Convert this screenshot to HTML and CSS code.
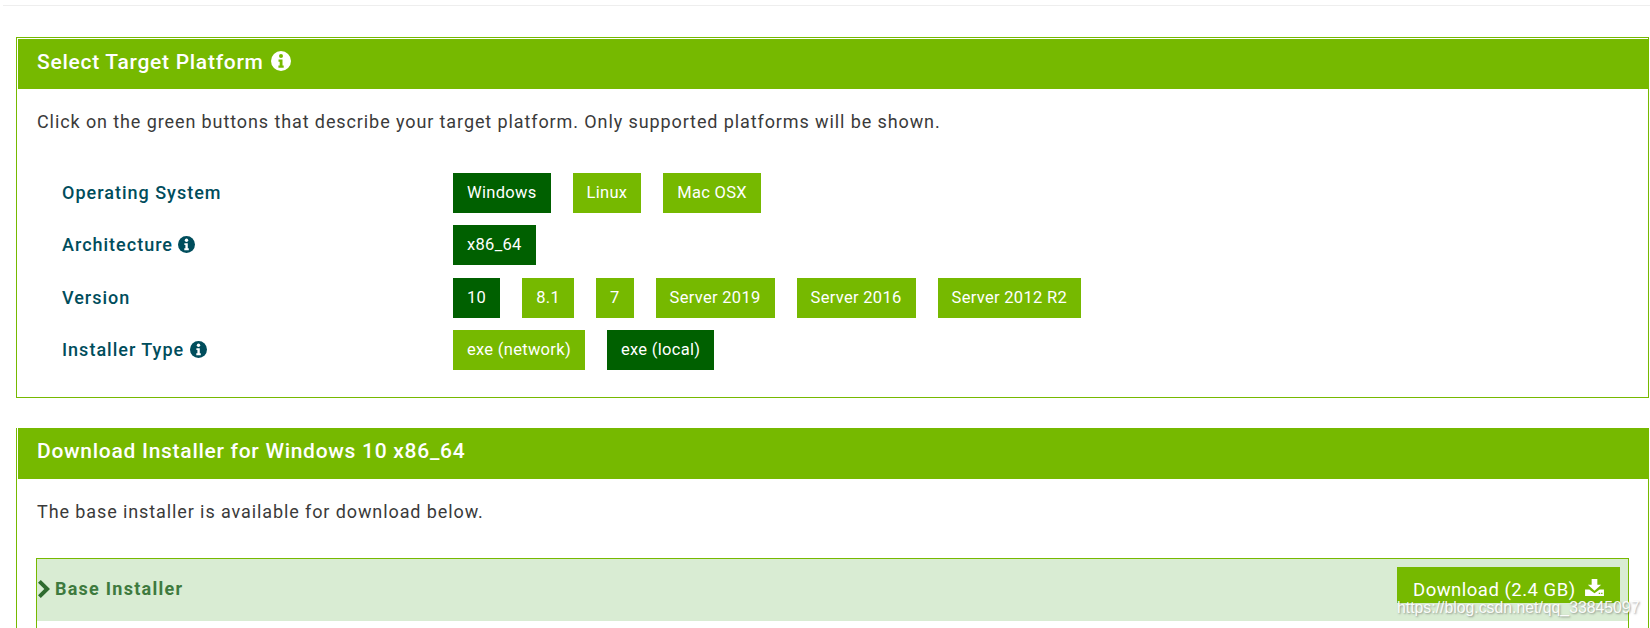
FILE: index.html
```html
<!DOCTYPE html>
<html lang="en">
<head>
  <meta charset="UTF-8" />
  <title>Download Installer</title>
  <link rel="stylesheet" href="styles.css">
</head>

<body>
  <hr class="top-rule">

  <section class="panel panel-target">
    <h2 class="panel-title">Select Target Platform
      <svg class="info" viewBox="0 0 20 20"><circle cx="10" cy="10" r="10" fill="currentColor"/><circle class="info-mark" cx="10" cy="5" r="2"/><path class="info-mark" d="M7.5 8.500h4v6h1.200v2.200H7.400v-2.200h1.300v-3.800H7.500z"/></svg>
    </h2>
    <p class="intro">Click on the green buttons that describe your target platform. Only supported platforms will be shown.</p>

    <div class="options">
      <div class="option-name">Operating System</div>
      <div class="option-buttons">
        <span class="btn selected">Windows</span>
        <span class="btn">Linux</span>
        <span class="btn">Mac OSX</span>
      </div>

      <div class="option-name">Architecture
        <svg class="info" viewBox="0 0 20 20"><circle cx="10" cy="10" r="10" fill="currentColor"/><circle class="info-mark" cx="10" cy="5" r="2"/><path class="info-mark" d="M7.5 8.500h4v6h1.200v2.200H7.400v-2.200h1.300v-3.800H7.500z"/></svg>
      </div>
      <div class="option-buttons">
        <span class="btn selected">x86_64</span>
      </div>

      <div class="option-name">Version</div>
      <div class="option-buttons">
        <span class="btn selected">10</span>
        <span class="btn">8.1</span>
        <span class="btn">7</span>
        <span class="btn">Server 2019</span>
        <span class="btn">Server 2016</span>
        <span class="btn">Server 2012 R2</span>
      </div>

      <div class="option-name">Installer Type
        <svg class="info" viewBox="0 0 20 20"><circle cx="10" cy="10" r="10" fill="currentColor"/><circle class="info-mark" cx="10" cy="5" r="2"/><path class="info-mark" d="M7.5 8.500h4v6h1.200v2.200H7.400v-2.200h1.300v-3.800H7.500z"/></svg>
      </div>
      <div class="option-buttons">
        <span class="btn">exe (network)</span>
        <span class="btn selected">exe (local)</span>
      </div>
    </div>
  </section>

  <section class="panel panel-download">
    <h2 class="panel-title">Download Installer for Windows 10 x86_64</h2>
    <p class="intro">The base installer is available for download below.</p>

    <div class="installer">
      <div class="installer-head">
        <div class="installer-name">
          <svg class="chevron" viewBox="0 0 12 18"><path d="M0 2.800 2.800 0 12 9l-9.200 9L0 15.200 6.300 9z"/></svg>
          Base Installer
        </div>
        <a class="download-btn">Download (2.4 GB)
          <svg class="download-icon" viewBox="0 0 20 18"><path d="M7 0h6v6h4l-7 6.500L3 6h4z"/><path fill-rule="evenodd" d="M0 11h4.500l5.500 4 5.500-4H20v7H0zM14.500 14.500h1.500V16h-1.500zM17 14.500h1.500V16H17z"/></svg>
        </a>
      </div>
    </div>
  </section>

  <div class="watermark">https://blog.csdn.net/qq_33845097</div>
</body>
</html>
```

FILE: styles.css
```css
body {
  margin: 0;
  padding: 5px 0 0 3px;
  height: 628px;
  box-sizing: border-box;
  font-family: Roboto, "Liberation Sans", sans-serif;
  background: #fff;
  color: #3a3a3a;
  position: relative;
  overflow: hidden;
}

.top-rule {
  margin: 0;
  border: none;
  height: 1px;
  background: #eee;
}

.panel {
  margin: 0 1px 0 13px;
  padding-left: 1px;
  border: 1px solid #76b900;
  box-sizing: border-box;
}

.panel-target {
  margin-top: 31px;
  height: 361px;
  padding-top: 1px;
}

.panel-download {
  margin-top: 30px;
  height: 200px;
  border-bottom: none;
  border-top: none;
}

.panel-title {
  margin: 0 -1px 0 0;
  height: 50px;
  line-height: 46px;
  padding-left: 19px;
  background: #76b900;
  color: #fff;
  font-size: 21px;
  font-weight: 500;
  letter-spacing: 0.72px;
}

.panel-download .panel-title {
  height: 51px;
  line-height: 47px;
}

.info {
  width: 20px;
  height: 20px;
  vertical-align: -2px;
  color: #fff;
  margin-left: 1px;
}

.panel-title .info-mark {
  fill: #76b900;
}

.intro {
  margin: 0;
  padding: 22px 0 0 19px;
  font-size: 18px;
  line-height: 22px;
  letter-spacing: 0.9px;
}

.options {
  display: grid;
  grid-template-columns: 391px 1fr;
  row-gap: 12.4px;
  margin: 40px 0 0 44px;
}

.option-name {
  color: #004d5c;
  font-size: 18px;
  font-weight: 500;
  letter-spacing: 1px;
  line-height: 40px;
}

.option-name .info {
  width: 17px;
  height: 17px;
  color: #004d5c;
  margin-left: 0;
}

.option-name .info-mark {
  fill: #fff;
}

.option-buttons {
  display: flex;
  gap: 22px;
}

.btn {
  display: block;
  height: 40px;
  line-height: 40px;
  padding: 0 14px;
  background: #76b900;
  color: #fff;
  font-size: 16.5px;
  letter-spacing: 0.3px;
}

.btn.selected {
  background: #006000;
}

.installer {
  margin: 35px 19px 0 18px;
  border: 1px solid #76b900;
  border-bottom: none;
  height: 70px;
  box-sizing: border-box;
}

.installer-head {
  display: flex;
  justify-content: space-between;
  height: 62px;
  background: #d9ecd3;
  padding: 8px 8px 0 1px;
  box-sizing: border-box;
}

.installer-name {
  display: flex;
  align-items: center;
  gap: 5px;
  height: 43px;
  color: #3e7a3e;
  font-size: 18px;
  font-weight: 700;
  letter-spacing: 1.25px;
}

.chevron {
  width: 12px;
  height: 18px;
  fill: #2f6b2f;
}

/* lower part of the button is covered by the stamp band in the screenshot */
.download-btn {
  display: block;
  height: 36px;
  line-height: 46px;
  width: 223px;
  box-sizing: border-box;
  padding-left: 16px;
  background: #76b900;
  color: #fff;
  font-size: 18.5px;
  letter-spacing: 0.5px;
}

.download-icon {
  width: 19px;
  height: 17px;
  fill: #fff;
  margin-left: 4px;
}

/* image host stamp lying over the button */
.watermark {
  position: absolute;
  left: 1397px;
  top: 598px;
  font-family: "Liberation Sans", sans-serif;
  font-size: 15.8px;
  line-height: 20px;
  color: rgba(255, 255, 255, 0.95);
  text-shadow: 1px 1px 2px rgba(80, 80, 80, 0.55);
}
```
